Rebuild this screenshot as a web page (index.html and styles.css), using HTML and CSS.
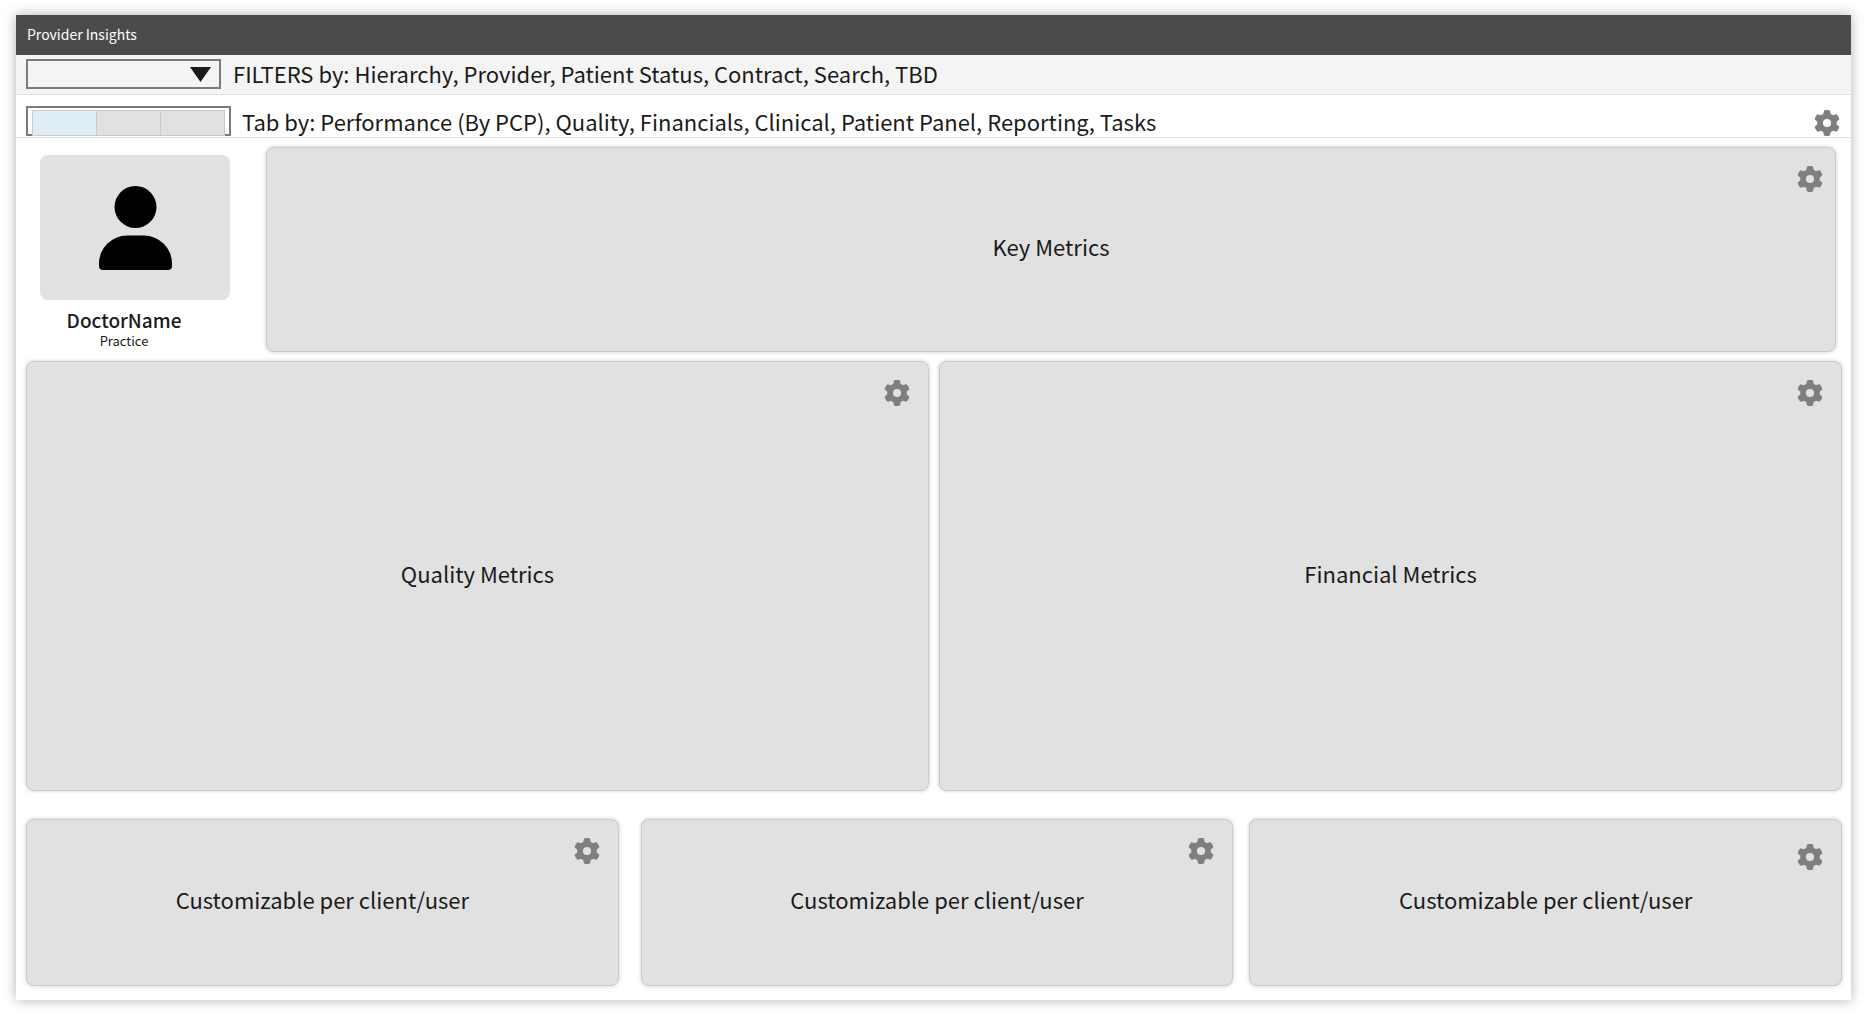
FILE: index.html
```html
<!DOCTYPE html>
<html lang="en">
<head>
  <meta charset="UTF-8">
  <meta name="viewport" content="width=device-width, initial-scale=1.0">
  <title>Provider Insights</title>
  <link rel="stylesheet" href="styles.css">
</head>
<body>

<svg class="sprite" aria-hidden="true">
  <symbol id="gear" viewBox="0 0 512 512">
    <path d="M495.9 166.6c3.2 8.7.5 18.4-6.4 24.600l-43.300 39.400c1.100 8.300 1.700 16.800 1.700 25.400s-.6 17.100-1.700 25.400l43.300 39.400c6.900 6.200 9.600 15.900 6.400 24.600c-4.400 11.900-9.700 23.300-15.800 34.300l-4.700 8.100c-6.600 11-14 21.400-22.100 31.200c-5.900 7.200-15.700 9.600-24.500 6.800l-55.700-17.700c-13.400 10.300-28.200 18.900-44 25.400l-12.500 57.100c-2 9.100-9 16.300-18.200 17.800c-13.800 2.300-28 3.500-42.500 3.500s-28.700-1.200-42.500-3.500c-9.200-1.500-16.200-8.700-18.200-17.800l-12.500-57.100c-15.800-6.500-30.600-15.100-44-25.400L83.100 425.900c-8.800 2.800-18.600.3-24.500-6.800c-8.100-9.800-15.500-20.200-22.100-31.200l-4.700-8.100c-6.100-11-11.400-22.400-15.800-34.300c-3.200-8.700-.5-18.400 6.400-24.600l43.300-39.400C64.600 273.100 64 264.600 64 256s.6-17.100 1.700-25.400L22.400 191.200c-6.900-6.200-9.600-15.900-6.400-24.600c4.400-11.900 9.700-23.300 15.800-34.300l4.700-8.100c6.600-11 14-21.400 22.100-31.200c5.900-7.200 15.700-9.600 24.500-6.800l55.700 17.700c13.400-10.300 28.200-18.900 44-25.400l12.500-57.100c2-9.100 9-16.300 18.200-17.800C227.300 1.200 241.500 0 256 0s28.700 1.200 42.500 3.500c9.200 1.500 16.200 8.700 18.200 17.800l12.500 57.100c15.800 6.500 30.600 15.100 44 25.400l55.700-17.700c8.800-2.800 18.600-.3 24.500 6.800c8.100 9.800 15.500 20.200 22.100 31.200l4.700 8.100c6.100 11 11.400 22.400 15.800 34.300zM256 336a80 80 0 1 0 0-160 80 80 0 1 0 0 160z"/>
  </symbol>
</svg>

<div class="window">
  <header class="title-bar">Provider Insights</header>

  <div class="filter-bar">
    <div class="dropdown">
      <select id="filter">
        <option value=""></option>
      </select>
      <svg class="arrow" viewBox="0 0 21 15" aria-hidden="true"><path d="M0 0h21L10.500 15z"/></svg>
    </div>
    <label for="filter">FILTERS by: Hierarchy, Provider, Patient Status, Contract, Search, TBD</label>
  </div>

  <div class="tab-bar">
    <div class="tabs" role="tablist">
      <button class="tab active" role="tab" aria-selected="true" aria-label="Performance"></button>
      <button class="tab" role="tab" aria-label="Quality"></button>
      <button class="tab" role="tab" aria-label="Financials"></button>
    </div>
    <span class="tab-text">Tab by: Performance (By PCP), Quality, Financials, Clinical, Patient Panel, Reporting, Tasks</span>
    <button class="gear" aria-label="Settings"><svg><use href="#gear"/></svg></button>
  </div>

  <main class="content">
    <div class="row top-row">
      <div class="profile">
        <div class="avatar">
          <svg viewBox="0 0 73 84" aria-hidden="true">
            <circle cx="36.500" cy="21" r="21"/>
            <path d="M28 49.500h17a28 28 0 0 1 28 28v2.500q0 4-4 4H4q-4 0-4-4v-2.500a28 28 0 0 1 28-28z"/>
          </svg>
        </div>
        <div class="doctor-name">DoctorName</div>
        <div class="practice">Practice</div>
      </div>
      <section class="card key-card">
        <span>Key Metrics</span>
        <button class="gear" aria-label="Key Metrics settings"><svg><use href="#gear"/></svg></button>
      </section>
    </div>

    <div class="row metrics-row">
      <section class="card">
        <span>Quality Metrics</span>
        <button class="gear" aria-label="Quality Metrics settings"><svg><use href="#gear"/></svg></button>
      </section>
      <section class="card">
        <span>Financial Metrics</span>
        <button class="gear" aria-label="Financial Metrics settings"><svg><use href="#gear"/></svg></button>
      </section>
    </div>

    <div class="row custom-row">
      <section class="card">
        <span>Customizable per client/user</span>
        <button class="gear" aria-label="Settings"><svg><use href="#gear"/></svg></button>
      </section>
      <section class="card">
        <span>Customizable per client/user</span>
        <button class="gear" aria-label="Settings"><svg><use href="#gear"/></svg></button>
      </section>
      <section class="card">
        <span>Customizable per client/user</span>
        <button class="gear" aria-label="Settings"><svg><use href="#gear"/></svg></button>
      </section>
    </div>
  </main>
</div>

</body>
</html>
```
FILE: styles.css
```css
* {
  box-sizing: border-box;
}
body {
  margin: 0;
  padding: 15px 15px 15px 16px;
  min-height: 100vh;
  display: flex;
  background: #fff;
  color: #1a1a1a;
  font-family: "Noto Sans CJK SC", sans-serif;
  font-size: 22px;
  line-height: 28px;
}
button {
  padding: 0;
  border: none;
  background: none;
  cursor: pointer;
}
.sprite {
  position: absolute;
  width: 0;
  height: 0;
}
.window {
  flex: 1;
  display: flex;
  flex-direction: column;
  background: #fff;
  box-shadow: 0 0 12px rgba(0, 0, 0, 0.3);
}
.title-bar {
  height: 40px;
  padding-left: 11px;
  background: #4b4b4b;
  color: #fff;
  font-size: 14px;
  line-height: 38px;
}

/* filters */
.filter-bar {
  display: flex;
  gap: 12px;
  height: 40px;
  padding: 4px 10px 0;
  background: #f4f4f4;
  border-bottom: 1px solid #e2e2e2;
}
.dropdown {
  display: grid;
  align-items: center;
  width: 195px;
  height: 30px;
}
.dropdown select,
.arrow {
  grid-area: 1 / 1;
}
.dropdown select {
  width: 100%;
  height: 30px;
  appearance: none;
  border: 2px solid #7b7b7b;
  border-radius: 0;
  background: #f4f4f4;
}
.arrow {
  justify-self: end;
  width: 21px;
  height: 15px;
  margin-right: 10px;
  fill: #1a1a1a;
  pointer-events: none;
}

/* tabs */
.tab-bar {
  display: flex;
  align-items: flex-end;
  height: 43px;
  padding: 0 11px 1px 10px;
  border-bottom: 1px solid #e2e2e2;
}
.tabs {
  display: flex;
  width: 205px;
  height: 30px;
  padding: 2px 4px 0;
  border: 2px solid #7b7b7b;
}
.tab {
  flex: 1;
  height: 26px;
  border: 1px solid #cbcbcb;
  border-left-width: 0;
  background: #e1e1e1;
}
.tab:first-child {
  border-left-width: 1px;
}
.tab.active {
  background: #dfedf5;
}
.tab-text {
  flex: 1;
  margin-left: 11px;
  line-height: 30px;
}
.gear {
  width: 26px;
  height: 26px;
}
.gear svg {
  display: block;
  width: 26px;
  height: 26px;
  fill: #7f7f7f;
}

/* cards */
.content {
  flex: 1;
  display: flex;
  flex-direction: column;
  padding: 9px 9px 14px 10px;
}
.row {
  display: flex;
}
.card {
  flex: 1;
  display: grid;
  place-items: center;
  background: #e1e1e1;
  border: 1px solid #cbcbcb;
  border-radius: 8px;
  box-shadow: 0 0 4px rgba(0, 0, 0, 0.2);
}
.card span,
.card .gear {
  grid-area: 1 / 1;
}
.card span {
  margin-bottom: 7px;
}
.card .gear {
  place-self: start end;
  margin: 18px 18px;
}
.top-row {
  height: 205px;
  margin-bottom: 9px;
  padding-right: 6px;
}
.key-card .gear {
  margin-right: 12px;
}
.metrics-row {
  flex: 1;
  gap: 10px;
  margin-bottom: 28px;
}
.custom-row {
  height: 167px;
  gap: 16px;
}
.custom-row .card:first-child {
  margin-right: 6px;
}
.custom-row .card:last-child .gear {
  margin-top: 24px;
}

/* profile */
.profile {
  width: 240px;
  padding-top: 8px;
}
.avatar {
  display: flex;
  align-items: center;
  justify-content: center;
  width: 190px;
  height: 145px;
  margin-left: 14px;
  border-radius: 8px;
  background: #e1e1e1;
}
.avatar svg {
  width: 73px;
  height: 84px;
  fill: #000;
}
.doctor-name,
.practice {
  width: 196px;
  text-align: center;
}
.doctor-name {
  margin-top: 8px;
  font-size: 19px;
  font-weight: 500;
  line-height: 24px;
}
.practice {
  font-size: 13px;
  line-height: 18px;
}
```
